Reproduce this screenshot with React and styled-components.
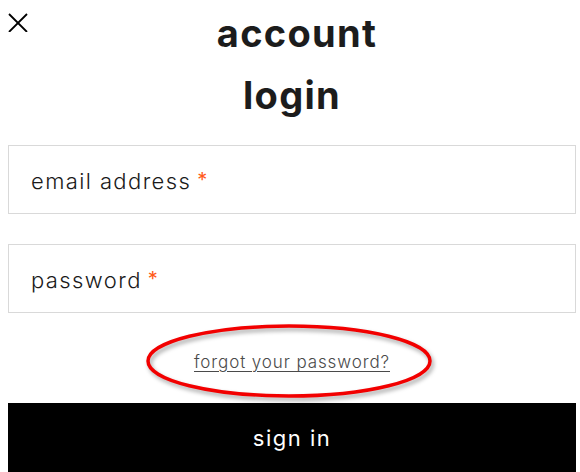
import React from "react";
import styled, { createGlobalStyle } from "styled-components";

const Global = createGlobalStyle`
  html, body { margin: 0; padding: 0; background: #fff; }
  body { font-family: Inter, "Noto Sans", sans-serif; color: #1b1b1b; }
  * { box-sizing: border-box; }
`;

const Page = styled.div`
  width: 580px;
  padding: 2px 4px 0 8px;
  display: flex;
  flex-direction: column;
`;

const Header = styled.header`
  display: grid;
  grid-template-columns: 40px 1fr 40px;
  align-items: start;
`;

const CloseButton = styled.button`
  all: unset;
  display: block;
  width: 22px;
  height: 22px;
  margin-top: 8px;
  margin-left: -1px;
  cursor: pointer;
  svg { display: block; }
`;

const Title = styled.h1`
  margin: 0;
  font-family: Inter, sans-serif;
  font-weight: 700;
  font-size: 38px;
  line-height: 62px;
  letter-spacing: 1.3px;
  text-align: center;
  color: #1c1c1c;
`;

const TitleLine = styled.span`
  display: block;
  padding-left: ${(p) => p.$shift || 0}px;
`;

const Form = styled.form`
  display: flex;
  flex-direction: column;
  margin-top: 19px;
`;

const Field = styled.label`
  display: flex;
  align-items: center;
  height: 69px;
  border: 1px solid #d9d9d9;
  padding: 3px 22px 0;
  font-size: 22px;
  font-weight: 300;
  letter-spacing: 1.4px;
  color: #1a1a1a;
  margin-bottom: ${(p) => p.$gap || 0}px;
`;

const Required = styled.span`
  color: #ff5a1a;
  margin-left: 6px;
  font-size: 20px;
  font-weight: 400;
  margin-top: -3px;
`;

const ForgotRow = styled.div`
  position: relative;
  height: 90px;
  display: flex;
  align-items: center;
  justify-content: center;
`;

const ForgotLink = styled.a`
  font-size: 17px;
  font-weight: 300;
  letter-spacing: 0.9px;
  color: #4a4a4a;
  text-decoration: underline;
  text-underline-offset: 3px;
  margin-top: 8px;
`;

const Annotation = styled.svg`
  position: absolute;
  left: calc(50% - 148px);
  top: 8px;
  pointer-events: none;
  filter: drop-shadow(2px 3px 2px rgba(0, 0, 0, 0.35));
`;

const SignIn = styled.button`
  all: unset;
  display: flex;
  align-items: center;
  justify-content: center;
  height: 69px;
  background: #000;
  color: #fff;
  font-family: Inter, sans-serif;
  font-size: 22px;
  font-weight: 400;
  letter-spacing: 1.5px;
`;

export default function App() {
  return (
    <>
      <Global />
      <Page>
        <Header>
          <CloseButton aria-label="close">
            <svg width="22" height="22" viewBox="0 0 22 22">
              <path d="M2 4 L20 22 M20 4 L2 22" stroke="#000" strokeWidth="1.8" fill="none" />
            </svg>
          </CloseButton>
          <Title>
            <TitleLine $shift={10}>account</TitleLine>
            <TitleLine>login</TitleLine>
          </Title>
          <span />
        </Header>
        <Form onSubmit={(e) => e.preventDefault()}>
          <Field $gap={30}>
            email address<Required>*</Required>
          </Field>
          <Field>
            password<Required>*</Required>
          </Field>
          <ForgotRow>
            <ForgotLink href="#">forgot your password?</ForgotLink>
            <Annotation width="296" height="84" viewBox="0 0 296 84">
              <ellipse cx="145" cy="40" rx="141" ry="35" fill="none" stroke="#f20000" strokeWidth="3.5" />
            </Annotation>
          </ForgotRow>
          <SignIn>sign in</SignIn>
        </Form>
      </Page>
    </>
  );
}
